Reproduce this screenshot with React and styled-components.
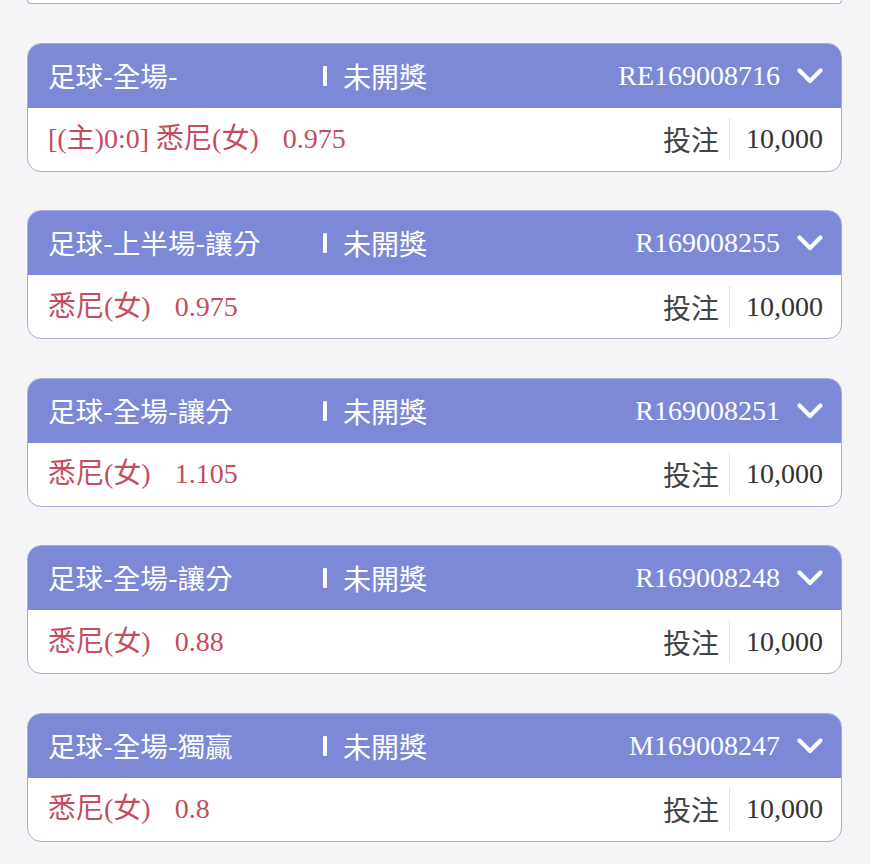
import React from 'react';
import styled, { createGlobalStyle } from 'styled-components';

const Global = createGlobalStyle`
  html, body { margin: 0; padding: 0; background: #f5f5f7; }
  body { font-family: "Liberation Serif", "Noto Sans CJK TC", serif; }
`;

const List = styled.div`
  display: flex;
  flex-direction: column;
  gap: 38.5px;
  padding: 0 28px 30px 27px;
`;

const CardTail = styled.div`
  height: 3px;
  background: #fff;
  border: 1.5px solid #a9acd3;
  border-top: none;
  border-radius: 0 0 14px 14px;
`;

const Card = styled.div`
  background: #fff;
  border: 1.5px solid #a9acd3;
  border-radius: 14px;
  overflow: hidden;
`;

const Header = styled.div`
  display: flex;
  align-items: center;
  height: 64px;
  padding: 0 18px 0 20px;
  background: #7d89d6;
  color: #fff;
  line-height: 1;
`;

const Title = styled.div`
  flex: 0 0 275px;
  font-family: "Noto Sans CJK TC", sans-serif;
  font-size: 27.6px;
`;

const Status = styled.div`
  display: flex;
  align-items: center;
  gap: 16px;
  font-family: "Noto Sans CJK TC", sans-serif;
  font-size: 28px;
  &::before {
    content: '';
    width: 4px;
    height: 20px;
    background: #fff;
    border-radius: 1px;
  }
`;

const Code = styled.div`
  margin-left: auto;
  display: flex;
  align-items: center;
  gap: 17px;
  font-size: 28px;
`;

const Body = styled.div`
  display: flex;
  align-items: center;
  height: 63px;
  padding: 0 18px 0 20px;
  line-height: 1;
`;

const Pick = styled.div`
  color: #c24e5e;
  font-size: 28px;
  white-space: pre;
`;

const Odds = styled.span`
  margin-left: 24px;
`;

const Stake = styled.div`
  margin-left: auto;
  display: flex;
  align-items: center;
  font-size: 28px;
  color: #333;
`;

const StakeLabel = styled.span`
  font-family: "Noto Sans CJK TC", sans-serif;
  color: #444;
  padding: 7px 10px 7px 0;
  border-right: 1px solid #dedede;
`;

const Amount = styled.span`
  padding-left: 16px;
`;

function Chevron() {
  return (
    <svg width="26" height="16" viewBox="0 0 26 16">
      <path d="M2.5 2.5 L13 13 L23.5 2.5" fill="none" stroke="#fff" strokeWidth="4.2" strokeLinecap="round" strokeLinejoin="round" />
    </svg>
  );
}

const bets = [
  { title: '足球-全場-', code: 'RE169008716', pick: '[(主)0:0] 悉尼(女)', odds: '0.975' },
  { title: '足球-上半場-讓分', code: 'R169008255', pick: '悉尼(女)', odds: '0.975' },
  { title: '足球-全場-讓分', code: 'R169008251', pick: '悉尼(女)', odds: '1.105' },
  { title: '足球-全場-讓分', code: 'R169008248', pick: '悉尼(女)', odds: '0.88' },
  { title: '足球-全場-獨贏', code: 'M169008247', pick: '悉尼(女)', odds: '0.8' },
];

export default function App() {
  return (
    <>
      <Global />
      <List>
        <CardTail />
        {bets.map((b) => (
          <Card key={b.code}>
            <Header>
              <Title>{b.title}</Title>
              <Status>未開獎</Status>
              <Code>
                {b.code}
                <Chevron />
              </Code>
            </Header>
            <Body>
              <Pick>
                {b.pick}
                <Odds>{b.odds}</Odds>
              </Pick>
              <Stake>
                <StakeLabel>投注</StakeLabel>
                <Amount>10,000</Amount>
              </Stake>
            </Body>
          </Card>
        ))}
      </List>
    </>
  );
}
